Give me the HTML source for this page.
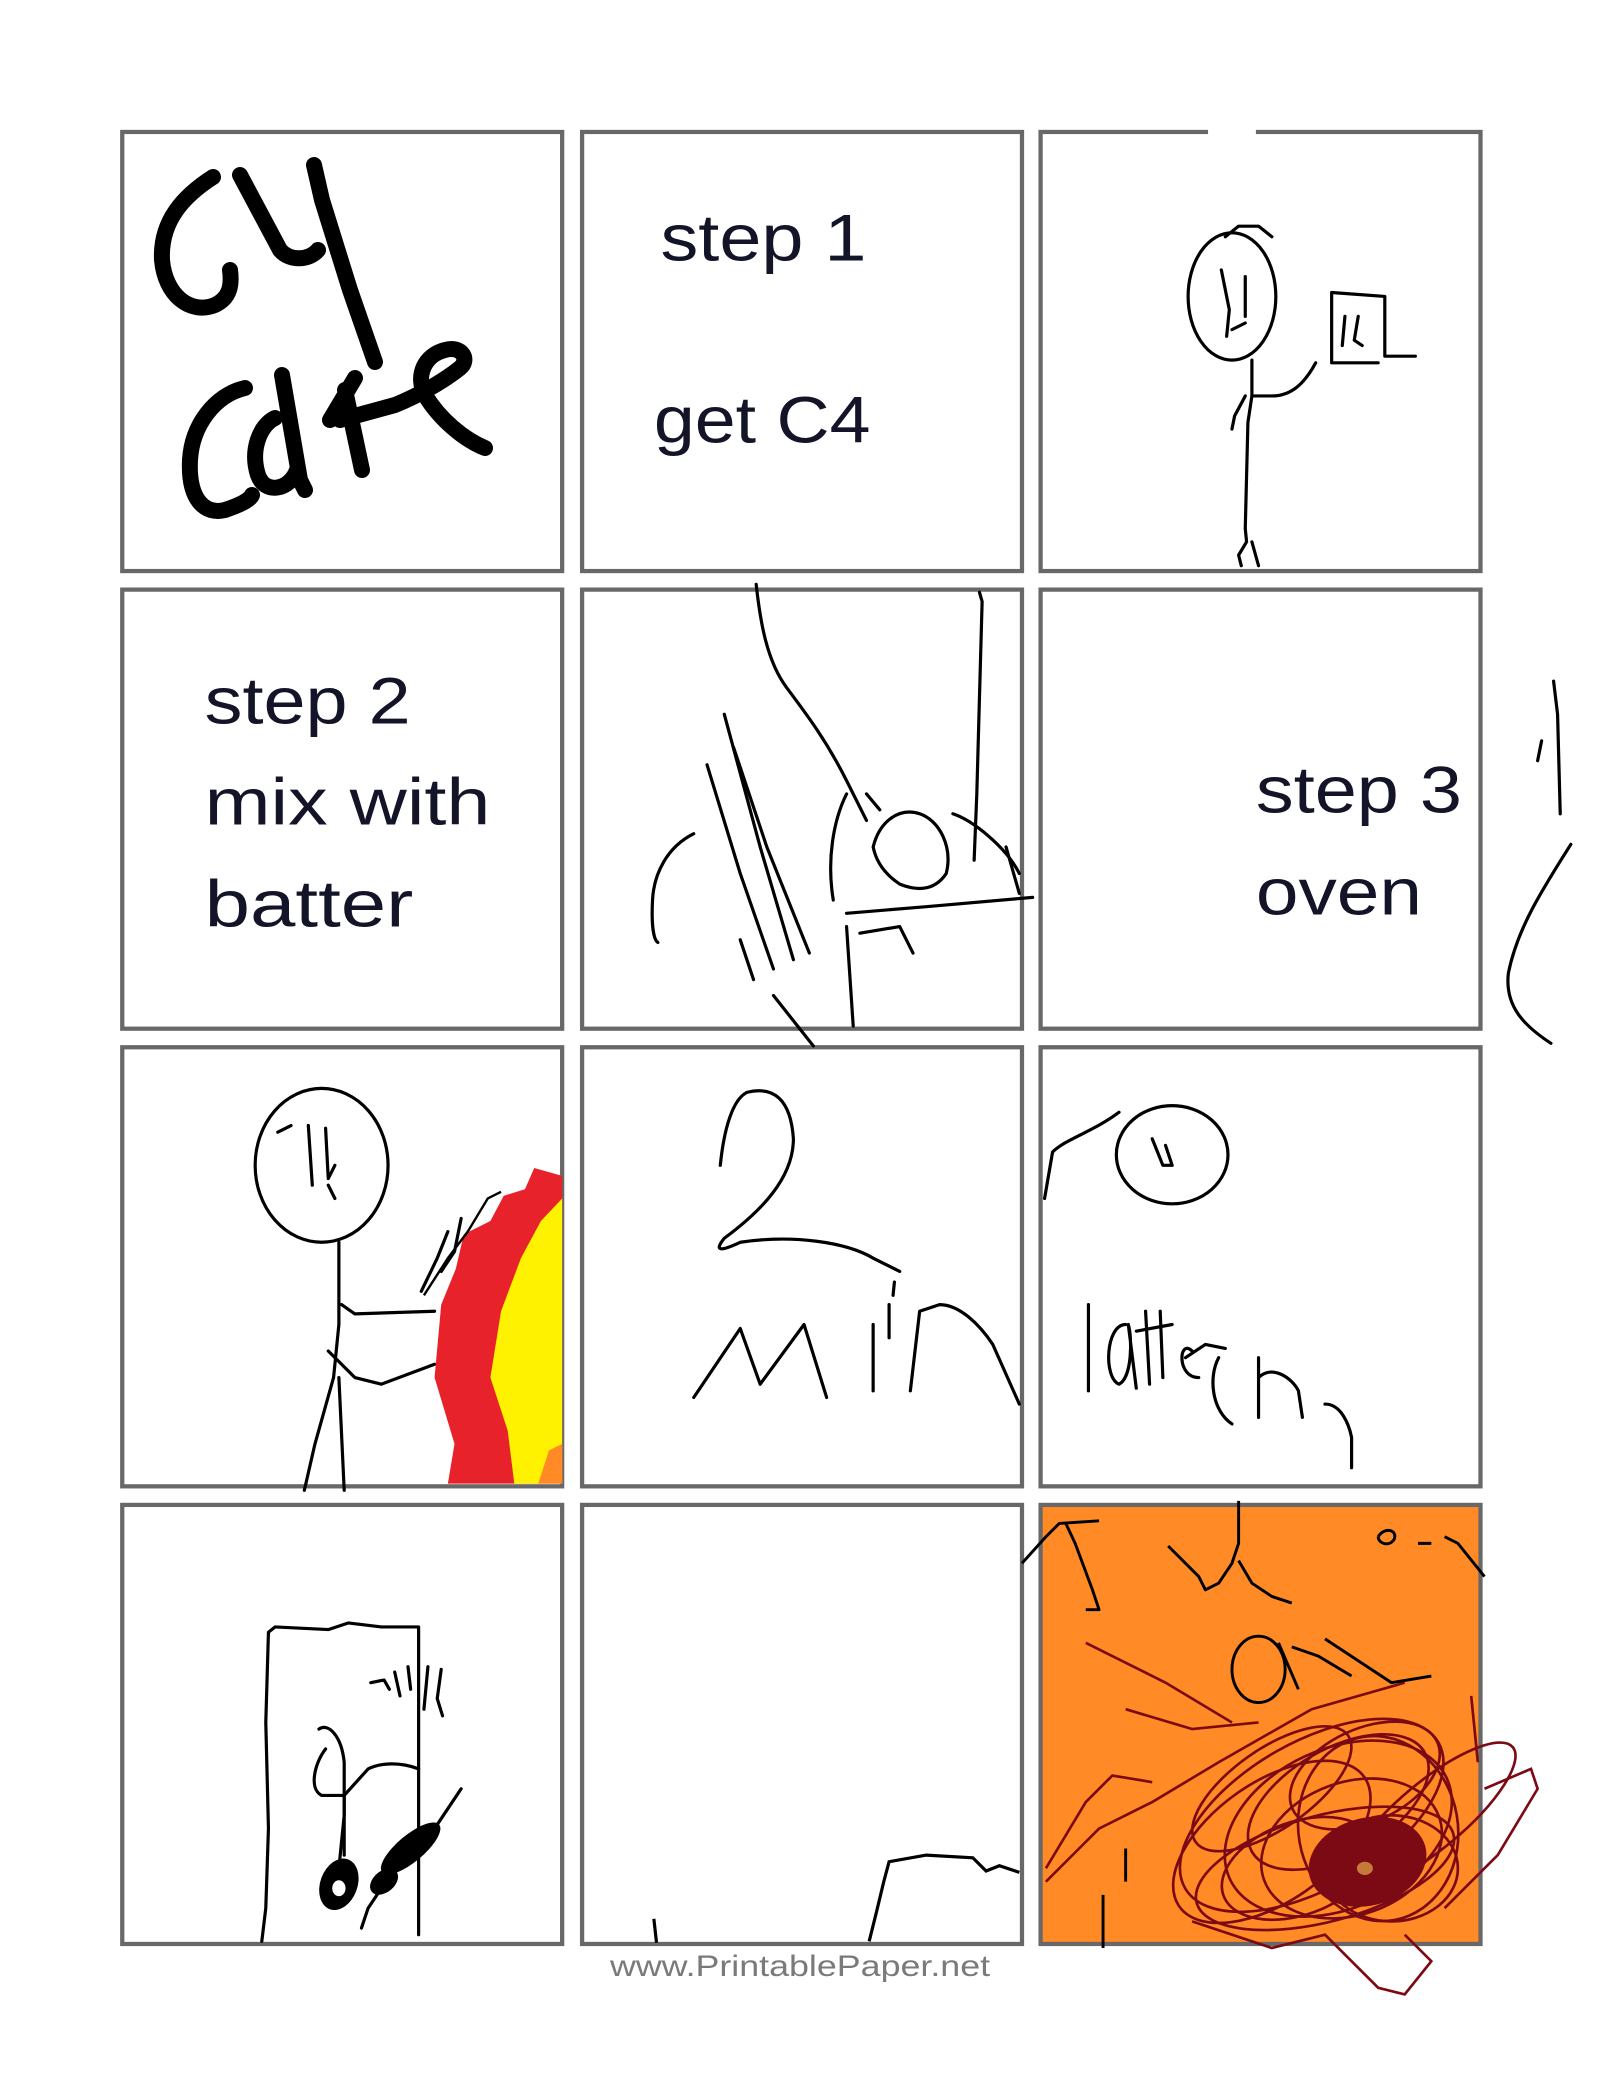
<!DOCTYPE html>
<html><head><meta charset="utf-8"><style>
html,body{margin:0;padding:0;background:#fff;}
svg{display:block;}
</style></head><body>
<svg width="1600" height="2073" viewBox="0 0 1600 2073" xmlns="http://www.w3.org/2000/svg">
<rect width="1600" height="2073" fill="#fff"/>
<g transform="matrix(1.3290 0 0 1.3265 -4 -2)">
<g fill="#fff" stroke="#686868" stroke-width="3.2">
<rect x="95" y="101" width="331" height="331"/>
<rect x="441" y="101" width="331" height="331"/>
<rect x="786" y="101" width="331" height="331"/>
<rect x="95" y="446" width="331" height="331"/>
<rect x="441" y="446" width="331" height="331"/>
<rect x="786" y="446" width="331" height="331"/>
<rect x="95" y="791" width="331" height="331"/>
<rect x="441" y="791" width="331" height="331"/>
<rect x="786" y="791" width="331" height="331"/>
<rect x="95" y="1136" width="331" height="331"/>
<rect x="441" y="1136" width="331" height="331"/>
<rect x="786" y="1136" width="331" height="331" fill="#ff8a26"/>
</g>
<rect x="912" y="97" width="36" height="8" fill="#fff"/>
<g font-family="'Liberation Sans',sans-serif" font-size="50" fill="#141428">
<text x="500" y="198" textLength="155" lengthAdjust="spacingAndGlyphs">step 1</text>
<text x="495" y="335" textLength="163" lengthAdjust="spacingAndGlyphs">get C4</text>
<text x="157" y="547" textLength="155" lengthAdjust="spacingAndGlyphs">step 2</text>
<text x="157" y="623" textLength="215" lengthAdjust="spacingAndGlyphs">mix with</text>
<text x="157" y="700" textLength="157" lengthAdjust="spacingAndGlyphs">batter</text>
<text x="948" y="614" textLength="155" lengthAdjust="spacingAndGlyphs">step 3</text>
<text x="948" y="691" textLength="125" lengthAdjust="spacingAndGlyphs">oven</text>
</g>
<text x="462" y="1491" font-family="'Liberation Sans',sans-serif" font-size="22" fill="#7a7a7a" textLength="286" lengthAdjust="spacingAndGlyphs">www.PrintablePaper.net</text>

<g fill="none" stroke="#000" stroke-width="2.4" stroke-linecap="round" stroke-linejoin="round">
<ellipse cx="930" cy="225" rx="33" ry="48"/>
<path d="M925,180 L935,172 L950,172 L960,180"/>
<path d="M922,205 L928,235 L926,255 M940,210 L940,240 M930,250 L940,245"/>
<path d="M945,273 L945,300 L942,320 L940,400 L941,410 L935,420 L937,428 M945,410 L950,428"/>
<path d="M945,300 L960,300 C975,300 985,290 993,275"/>
<path d="M940,300 L932,315 L930,325"/>
<path d="M1005,275 L1005,222 L1045,225 L1045,270 L1068,270 M1005,275 L1040,275"/>
<path d="M1015,240 L1013,262 M1025,240 L1022,258 L1028,262"/>
<path d="M572,442 C575,470 580,500 595,520 C610,540 625,560 640,590 L655,620"/>
<path d="M740,448 L742,455 L738,600 L736,650"/>
<path d="M548,540 L575,640 L600,725"/>
<path d="M535,578 L560,660 L585,732"/>
<path d="M555,565 L580,640 L612,720"/>
<path d="M525,630 C505,640 495,660 494,680 C493,700 495,710 498,712"/>
<path d="M660,640 C665,620 680,610 695,615 C710,620 720,640 715,660 C705,675 690,672 680,668 C668,660 662,650 660,640"/>
<path d="M640,600 C630,620 625,650 630,680 M655,600 L665,612"/>
<path d="M720,615 C735,620 760,640 770,660 M760,640 L770,675"/>
<path d="M640,690 L700,685 L780,678"/>
<path d="M650,705 L680,700 L690,720 M640,700 L645,775"/>
<path d="M585,752 L615,790 M560,710 L570,740"/>
<path d="M1172,515 L1175,540 L1177,615 M1163,560 L1160,575"/>
<path d="M1185,638 C1165,670 1145,700 1138,735 C1135,760 1150,775 1170,788"/>
<ellipse cx="245" cy="880" rx="50" ry="58"/>
<path d="M212,855 L222,850 M235,850 L238,895 M248,852 L250,890 L255,880 M250,895 L255,905"/>
<path d="M258,938 L258,1000 L254,1040 L240,1090 L232,1125 M258,1040 L262,1125"/>
<path d="M260,985 L270,992 L330,990"/>
<path d="M250,1020 L270,1040 L290,1045 L330,1030"/>
<path d="M320,975 L332,950 L340,930 M335,960 L345,945 L350,920"/>
<path d="M545,880 C548,850 555,830 565,825 C585,820 598,830 600,860 C600,890 575,915 548,935 C540,945 545,945 560,938 C600,932 640,938 660,950 L680,960"/>
<path d="M676,968 L675,978 M672,985 L672,1010"/>
<path d="M525,1055 L560,1003 L575,1045 L608,1000 L625,1055"/>
<path d="M660,1000 L660,1050"/>
<path d="M688,1050 L695,990 L710,985 C725,985 740,1000 750,1015 L770,1060"/>
<ellipse cx="885" cy="872" rx="42" ry="37"/>
<path d="M870,860 L878,880 L885,880 L880,865"/>
<path d="M789,905 L795,870 C805,860 825,855 845,840"/>
<path d="M822,985 L822,1050"/>
<path d="M850,1000 C835,1000 833,1040 845,1045 C855,1040 855,1010 852,1000 L858,1048"/>
<path d="M865,990 L868,1045 M876,990 L878,1040 M858,1005 L885,1000"/>
<path d="M900,1020 C890,1010 888,1040 905,1040 M895,1025 L910,1015 L925,1018"/>
<path d="M920,1025 C912,1040 915,1065 930,1075 M950,1025 L950,1070 M950,1040 C960,1030 975,1040 980,1050 L983,1070"/>
<path d="M1000,1060 C1012,1060 1018,1075 1020,1085 L1020,1108"/>
<path d="M200,1465 L203,1440 L205,1380 L203,1300 L205,1232 L210,1228 L250,1230 L265,1225 L290,1228 L318,1228 L318,1460"/>
<path d="M243,1305 C250,1300 260,1310 262,1330 L262,1370 L258,1410"/>
<path d="M248,1320 C240,1330 235,1350 245,1355 L262,1355 L280,1335 C290,1330 305,1330 318,1335"/>
<path d="M262,1355 L262,1400"/>
<path d="M282,1270 L292,1268 L296,1275 M300,1262 L304,1280 M310,1258 L312,1275 M325,1258 L322,1290 M335,1260 L332,1282 L336,1295"/>
<path d="M350,1350 L330,1380 L300,1410 L280,1440 L275,1455"/>
</g>
<g fill="#000">
<ellipse cx="258" cy="1422" rx="14" ry="20" transform="rotate(20 258 1422)"/>
<ellipse cx="312" cy="1395" rx="28" ry="10" transform="rotate(-40 312 1395)"/>
<ellipse cx="292" cy="1420" rx="12" ry="8" transform="rotate(-40 292 1420)"/>
</g>
<ellipse cx="258" cy="1425" rx="5" ry="6" fill="#fff"/>
<path d="M657,1465 L662,1445 L668,1420 L672,1405 L700,1400 L735,1402 L745,1412 L755,1408 L770,1413" fill="none" stroke="#000" stroke-width="2.4"/>
<path d="M495,1448 L497,1466" fill="none" stroke="#000" stroke-width="2.4"/>
<path d="M426,888 L405,882 L398,898 L382,903 L372,922 L352,932 L346,958 L335,985 L330,1040 L345,1090 L340,1120 L426,1120 Z" fill="#e8222a"/>
<path d="M426,905 L410,922 L395,950 L380,990 L372,1040 L385,1080 L390,1120 L426,1120 Z" fill="#fff200"/>
<path d="M408,1120 L416,1095 L426,1090 L426,1120 Z" fill="#ff8a26"/>
<path d="M322,978 L340,950 L355,930 L370,905 L380,900" fill="none" stroke="#000" stroke-width="1.8"/>
<g fill="none" stroke="#7c0a14" stroke-width="2">
<ellipse cx="1010" cy="1380" rx="90" ry="60" transform="rotate(-25 1010 1380)"/>
<ellipse cx="990" cy="1370" rx="110" ry="55" transform="rotate(-30 990 1370)"/>
<ellipse cx="1020" cy="1395" rx="70" ry="50" transform="rotate(-20 1020 1395)"/>
<ellipse cx="960" cy="1390" rx="85" ry="45" transform="rotate(-35 960 1390)"/>
<ellipse cx="1040" cy="1380" rx="60" ry="70" transform="rotate(-10 1040 1380)"/>
<ellipse cx="1000" cy="1410" rx="100" ry="40" transform="rotate(-15 1000 1410)"/>
<ellipse cx="1080" cy="1370" rx="80" ry="25" transform="rotate(-40 1080 1370)"/>
<ellipse cx="1010" cy="1360" rx="75" ry="40" transform="rotate(-30 1010 1360)"/>
<ellipse cx="1030" cy="1340" rx="60" ry="35" transform="rotate(-25 1030 1340)"/>
<ellipse cx="980" cy="1410" rx="60" ry="35" transform="rotate(-20 980 1410)"/>
<ellipse cx="1050" cy="1410" rx="50" ry="40"/>
<ellipse cx="960" cy="1350" rx="70" ry="30" transform="rotate(-35 960 1350)"/>
<path d="M790,1420 L830,1380 L870,1360 L920,1330 L990,1290 L1060,1270"/>
<path d="M790,1410 L820,1360 L840,1340 L870,1345"/>
<path d="M820,1240 L880,1270 L930,1300"/>
<path d="M850,1290 L900,1305 L950,1300"/>
<path d="M900,1450 L960,1470 L1000,1460 L1040,1500 L1060,1505 L1080,1480 L1060,1460"/>
<path d="M1110,1280 L1115,1330 M1090,1440 L1130,1400 L1160,1350 L1155,1335 L1120,1350"/>
</g>
<ellipse cx="1032" cy="1405" rx="45" ry="33" fill="#7c0a14" transform="rotate(-15 1032 1405)"/>
<ellipse cx="1030" cy="1410" rx="6" ry="5" fill="#c47a3a"/>
<g fill="none" stroke="#000" stroke-width="2.2" stroke-linejoin="round">
<path d="M772,1180 L790,1160 L800,1150 L830,1148 M805,1150 L812,1165 L825,1200 L830,1215 L820,1215"/>
<path d="M882,1167 L905,1190 L910,1200 L920,1195 L930,1180 L935,1165 L935,1133 M935,1178 L945,1195 L960,1205 L975,1210"/>
<ellipse cx="950" cy="1260" rx="20" ry="25"/>
<path d="M965,1240 L980,1275 M975,1243 L995,1250 L1020,1265 M1000,1237 L1050,1270 L1080,1265"/>
<path d="M1040,1160 C1045,1152 1055,1155 1052,1162 C1048,1168 1040,1165 1040,1160 M1070,1165 L1080,1165 M1090,1160 L1100,1165 L1120,1190"/>
<path d="M850,1395 L850,1420 M833,1430 L833,1470"/>
</g>
</g>
<!-- cell1 drawn in real coords, on top -->
<g fill="none" stroke="#000" stroke-width="16" stroke-linecap="round" stroke-linejoin="round">
<path d="M213,177 C185,195 160,220 162,260 C165,295 190,315 215,305 C230,298 232,285 230,270"/>
<path d="M240,175 L280,250 C290,262 310,260 318,250"/>
<path d="M314,165 L322,200 L350,290 L375,362"/>
<path d="M245,388 C215,395 192,425 190,460 C188,500 205,515 225,510 C240,505 250,500 252,495"/>
<path d="M282,375 L300,480 L305,490 M275,418 C260,425 250,450 258,475 C265,495 290,490 297,470"/>
<path d="M355,378 L330,420 M345,390 L362,470"/>
<path d="M340,420 L395,405 C420,395 445,380 460,368 C470,360 462,345 445,350 C425,355 415,375 425,395 C440,420 465,440 485,448"/>
</g>
</svg>
</body></html>
